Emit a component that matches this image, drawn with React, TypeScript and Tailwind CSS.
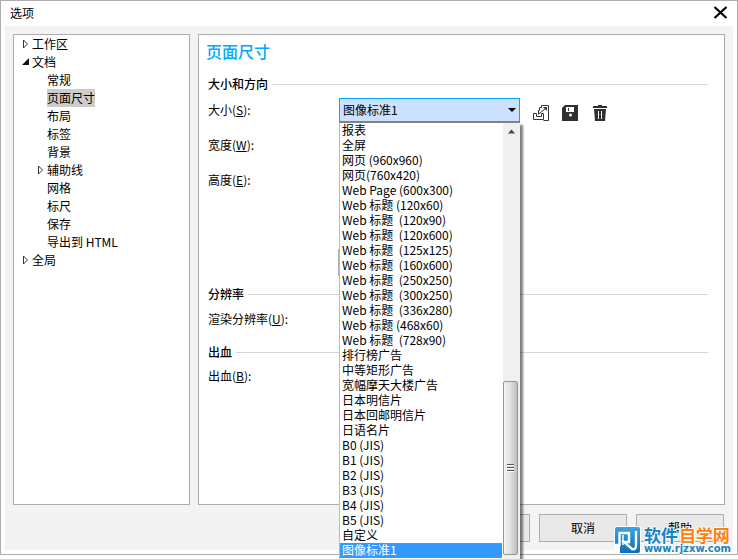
import type { ReactNode } from "react";

const sizes = [
  "报表", "全屏", "网页 (960x960)", "网页(760x420)", "Web Page (600x300)",
  "Web 标题 (120x60)", "Web 标题  (120x90)", "Web 标题  (120x600)", "Web 标题  (125x125)",
  "Web 标题  (160x600)", "Web 标题  (250x250)", "Web 标题  (300x250)", "Web 标题  (336x280)",
  "Web 标题 (468x60)", "Web 标题  (728x90)", "排行榜广告", "中等矩形广告", "宽幅摩天大楼广告",
  "日本明信片", "日本回邮明信片", "日语名片", "B0 (JIS)", "B1 (JIS)", "B2 (JIS)", "B3 (JIS)",
  "B4 (JIS)", "B5 (JIS)", "自定义", "图像标准1",
];
const selected = "图像标准1";

type Node = { label: string; state?: "open" | "closed"; children?: Node[] };

const tree: Node[] = [
  { label: "工作区", state: "closed" },
  {
    label: "文档",
    state: "open",
    children: [
      { label: "常规" }, { label: "页面尺寸" }, { label: "布局" }, { label: "标签" }, { label: "背景" },
      { label: "辅助线", state: "closed" }, { label: "网格" }, { label: "标尺" }, { label: "保存" },
      { label: "导出到 HTML" },
    ],
  },
  { label: "全局", state: "closed" },
];

function Arrow({ state }: { state?: "open" | "closed" }) {
  return (
    <svg className="h-[10px] w-[9px] shrink-0" viewBox="0 0 9 10" aria-hidden="true">
      {state === "closed" && <path d="M2.5 1v8L6.5 5z" fill="#fff" stroke="#333" />}
      {state === "open" && <path d="M8 1v7H1z" fill="#111" />}
    </svg>
  );
}

function Branch({ nodes, nested }: { nodes: Node[]; nested?: boolean }) {
  return (
    <ul className={nested ? "pl-[15px]" : ""}>
      {nodes.map((n) => (
        <li key={n.label}>
          <div className="flex h-[18px] items-center gap-[2px]">
            <Arrow state={n.state} />
            <span className={n.label === "页面尺寸" ? "bg-[#cccccc] leading-[18px]" : "leading-[18px]"}>{n.label}</span>
          </div>
          {n.children && <Branch nodes={n.children} nested />}
        </li>
      ))}
    </ul>
  );
}

function Section({ title }: { title: string }) {
  return (
    <h3 className="flex h-[18px] items-center gap-1 font-medium">
      {title}
      <span className="h-px flex-1 bg-[#d5d5d5]" />
    </h3>
  );
}

function Row({ text, hotkey, id, children }: { text: string; hotkey: string; id: string; children: ReactNode }) {
  return (
    <div className="flex h-6 items-center">
      <label htmlFor={id} className="w-[131px] shrink-0">
        {text}(<u>{hotkey}</u>):
      </label>
      {children}
    </div>
  );
}

function Field({ id }: { id: string }) {
  return <input id={id} type="text" className="h-6 w-[90px] border border-[#adadad] px-1" />;
}

function IconButton({ label, children }: { label: string; children: ReactNode }) {
  return (
    <button type="button" aria-label={label} className="mt-[7px] h-4 w-4">
      <svg viewBox="0 0 16 16" className="h-4 w-4">{children}</svg>
    </button>
  );
}

function SizeList() {
  return (
    <div className="absolute top-6 left-0 flex w-full border-t border-l border-t-[#858585] border-l-[#b9b9c8] bg-white shadow-[3px_3px_2px_#00000080]">
      <ul role="listbox" aria-label="大小" className="flex-1 pb-px">
        {sizes.map((s) => (
          <li
            key={s}
            role="option"
            aria-selected={s === selected}
            className={
              s === selected
                ? "h-[15px] bg-[#3399ff] pl-[2px] leading-[14px] whitespace-pre text-white"
                : "h-[15px] pl-[2px] leading-[14px] whitespace-pre"
            }
          >
            {s}
          </li>
        ))}
      </ul>
      <div className="ml-px flex w-[17px] flex-col bg-[#f0f0f0]">
        <svg viewBox="0 0 17 17" className="h-[17px] w-[17px]" aria-hidden="true">
          <path d="M5 10.500l3.500-4 3.500 4z" fill="#444" />
        </svg>
        <div className="mt-[241px] flex h-[174px] w-[15px] flex-col items-center justify-center rounded-xs border border-[#959595] bg-linear-to-r from-[#f4f4f4] via-[#dedede] to-[#bfbfc3]">
          <span className="h-[2px] w-[7px] border-b border-white bg-[#555]" />
          <span className="mt-px h-[2px] w-[7px] border-b border-white bg-[#555]" />
          <span className="mt-px h-[2px] w-[7px] border-b border-white bg-[#555]" />
        </div>
      </div>
    </div>
  );
}

function SizePicker() {
  return (
    <div className="relative h-6 w-[181px]">
      <select
        id="size"
        defaultValue={selected}
        className="h-6 w-full appearance-none border border-[#00a8ff] bg-[#cce0ff] px-[3px] leading-[18px]"
      >
        {sizes.map((s) => (
          <option key={s}>{s}</option>
        ))}
      </select>
      <svg viewBox="0 0 8 4" className="pointer-events-none absolute top-[10px] right-1 h-1 w-2" aria-hidden="true">
        <path d="M0 0h8L4 4z" fill="#000" />
      </svg>
      <SizeList />
    </div>
  );
}

function Watermark() {
  return (
    <div className="absolute right-[7px] bottom-[5px] flex items-center gap-px">
      <svg viewBox="0 0 29 28" className="h-7 w-[29px]" aria-hidden="true">
        <defs>
          <linearGradient id="tile" x1="0" y1="0" x2="0" y2="1">
            <stop offset="0" stopColor="#3aa5dd" />
            <stop offset="1" stopColor="#0b6fb5" />
          </linearGradient>
        </defs>
        <rect width="27" height="28" rx="3" fill="#fff" />
        <rect x="1" y="1" width="25" height="26" rx="2" fill="url(#tile)" />
        <path d="M1 19h4.500V7H15v9h-5l8 7c3 1 4-1 4-4V5" fill="none" stroke="#fff" strokeWidth="2.400" />
        <path d="M9 9v10" stroke="#fff" strokeWidth="1.500" />
        <path d="M0 20h6v8H0z" fill="#fff" />
      </svg>
      <div className="font-bold [text-shadow:1px_0_#fff,-1px_0_#fff,0_1px_#fff,0_-1px_#fff]">
        <div className="flex gap-px text-[17px] leading-[18px] text-[#1383c6]">
          软件<span className="text-[#ff7f11]">自学网</span>
        </div>
        <div className="font-['DejaVu_Sans',sans-serif] text-[10px] leading-[10px] text-[#1383c6]">www.rjzxw.com</div>
      </div>
    </div>
  );
}

const buttonClass = "h-7 w-[88px] border border-[#adadad] bg-[#e9e9e9] leading-[18px]";

export default function App() {
  return (
    <div className="relative flex h-screen flex-col overflow-hidden bg-white pb-1 font-['Noto_Sans_CJK_SC',sans-serif] text-[12px] leading-[18px] text-black">
      <div className="flex flex-1 flex-col border border-[#adadad] px-1 pb-1">
        <header className="flex h-[25px] items-center justify-between px-[5px] pb-[2px]">
          <h1>选项</h1>
          <button type="button" aria-label="关闭" className="h-[13px] w-[15px]">
            <svg viewBox="0 0 15 13" className="h-[13px] w-[15px]">
              <path d="M1.500 1l12 11M13.500 1l-12 11" stroke="#000" strokeWidth="2.200" />
            </svg>
          </button>
        </header>
        <main className="flex flex-1 flex-col bg-[#f3f3f3] px-2 pt-2">
          <div className="flex flex-1 gap-2">
            <nav aria-label="选项" className="w-[177px] shrink-0 border border-[#adadad] bg-white pl-[7px]">
              <Branch nodes={tree} />
            </nav>
            <section className="flex-1 border border-[#adadad] bg-white pr-4 pl-[9px]">
              <h2 className="mt-1 mb-3 -ml-[2px] text-[16px] leading-6 font-medium text-[#00a8ff]">页面尺寸</h2>
              <Section title="大小和方向" />
              <div className="mt-[5px] flex flex-col gap-[11px]">
                <Row text="大小" hotkey="S" id="size">
                  <div className="relative z-10 flex">
                    <SizePicker />
                    <div className="ml-[13px] flex gap-[13px]">
                      <IconButton label="应用页面大小">
                        <path
                          d="M5.500 9V5.500h1v-3h2v-2h7v15h-5M3.500 8.500h-3v6h10v-6h-2v3h-5zM5 9.500L12 4"
                          fill="none"
                          stroke="#333"
                        />
                        <path d="M10 2h4v4z" fill="#333" />
                      </IconButton>
                      <IconButton label="保存页面大小">
                        <path d="M3 0h13v16H0V3z" fill="#303030" />
                        <path d="M4 2h8v5H4z" fill="#fff" />
                        <path d="M6 3h1v3H6z" fill="#303030" />
                        <circle cx="8.500" cy="10" r="1.500" fill="#fff" />
                      </IconButton>
                      <IconButton label="删除页面大小">
                        <path d="M7 0h4v1h5v2H2V1h5zM3 4h12l-1 12H4z" fill="#303030" />
                        <path d="M7 6h1v8H7zM10 6h1v8h-1z" fill="#fff" />
                      </IconButton>
                    </div>
                  </div>
                </Row>
                <Row text="宽度" hotkey="W" id="width"><Field id="width" /></Row>
                <Row text="高度" hotkey="E" id="height"><Field id="height" /></Row>
              </div>
              <div className="mt-[57px] mb-[9px] pl-[130px]">
                <button type="button" aria-label="纵向" className="block h-[27px] w-[27px] border border-[#adadad] bg-[#e9e9e9]" />
              </div>
              <Section title="分辨率" />
              <div className="mt-1 mb-3">
                <Row text="渲染分辨率" hotkey="U" id="resolution"><Field id="resolution" /></Row>
              </div>
              <Section title="出血" />
              <div className="mt-[3px]">
                <Row text="出血" hotkey="B" id="bleed"><Field id="bleed" /></Row>
              </div>
            </section>
          </div>
          <footer className="flex h-[45px] justify-end gap-[9px] pt-[9px] pr-px">
            <button type="button" className={buttonClass}>确定</button>
            <button type="button" className={buttonClass}>取消</button>
            <button type="button" className={buttonClass}>帮助</button>
          </footer>
        </main>
      </div>
      <Watermark />
    </div>
  );
}
